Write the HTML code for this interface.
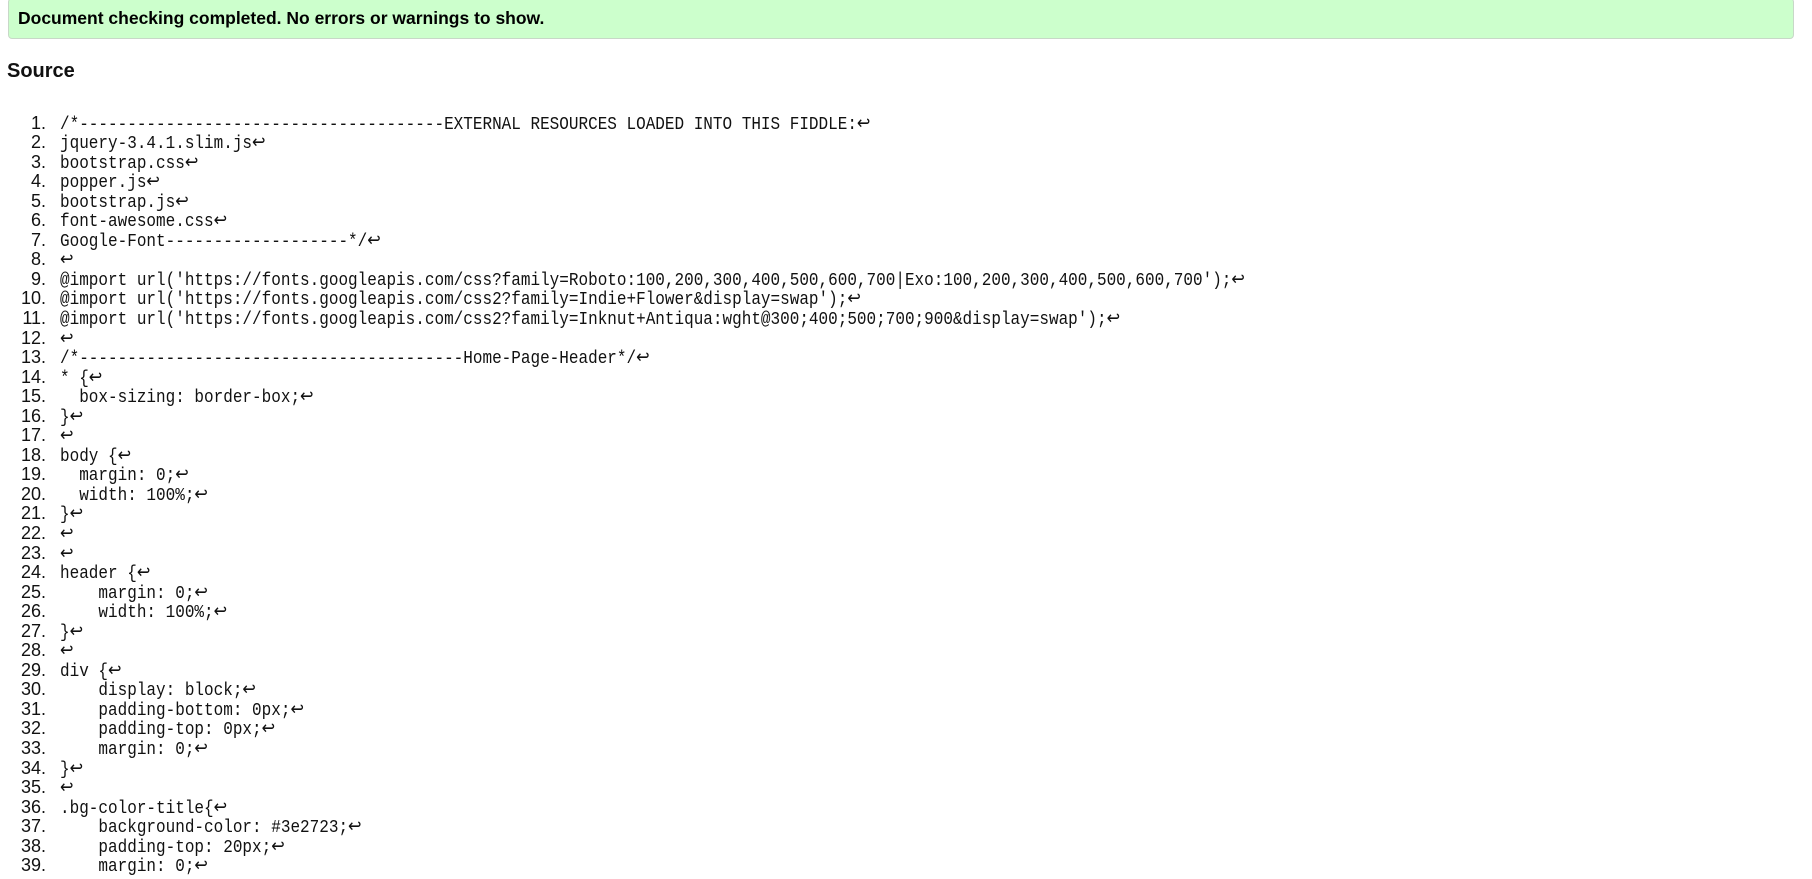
<!DOCTYPE html>
<html><head><meta charset="utf-8"><style>
body{margin:0;background:#fff;color:#111;}
.ok{position:absolute;left:8px;top:-2px;width:1786px;height:41px;background:#ccffcc;border:1px solid #c8d8c8;border-radius:4px;box-sizing:border-box;}
.ok span{position:absolute;left:9px;top:9px;font:bold 17.5px "Liberation Sans",sans-serif;color:#000;}
h2{position:absolute;left:7px;top:60px;margin:0;font:bold 20px "Liberation Sans",sans-serif;color:#111;}
.src{position:absolute;left:0;top:114.5px;}
.l{height:19.56px;white-space:pre;position:relative;}
.n{position:absolute;left:0;top:-1px;width:46px;text-align:right;font:18px/19.56px "Liberation Sans",sans-serif;}
.t{position:absolute;left:60px;top:1px;font:16px/19.56px "Liberation Mono",monospace;transform:scaleY(1.15);transform-origin:0 60%;}
</style></head><body>
<div class="ok"><span>Document checking completed. No errors or warnings to show.</span></div>
<h2>Source</h2>
<div class="src">
<div class="l"><span class="n">1.</span><span class="t">/*--------------------------------------EXTERNAL RESOURCES LOADED INTO THIS FIDDLE:↩</span></div>
<div class="l"><span class="n">2.</span><span class="t">jquery-3.4.1.slim.js↩</span></div>
<div class="l"><span class="n">3.</span><span class="t">bootstrap.css↩</span></div>
<div class="l"><span class="n">4.</span><span class="t">popper.js↩</span></div>
<div class="l"><span class="n">5.</span><span class="t">bootstrap.js↩</span></div>
<div class="l"><span class="n">6.</span><span class="t">font-awesome.css↩</span></div>
<div class="l"><span class="n">7.</span><span class="t">Google-Font-------------------*/↩</span></div>
<div class="l"><span class="n">8.</span><span class="t">↩</span></div>
<div class="l"><span class="n">9.</span><span class="t">@import url('https://fonts.googleapis.com/css?family=Roboto:100,200,300,400,500,600,700|Exo:100,200,300,400,500,600,700');↩</span></div>
<div class="l"><span class="n">10.</span><span class="t">@import url('https://fonts.googleapis.com/css2?family=Indie+Flower&amp;display=swap');↩</span></div>
<div class="l"><span class="n">11.</span><span class="t">@import url('https://fonts.googleapis.com/css2?family=Inknut+Antiqua:wght@300;400;500;700;900&amp;display=swap');↩</span></div>
<div class="l"><span class="n">12.</span><span class="t">↩</span></div>
<div class="l"><span class="n">13.</span><span class="t">/*----------------------------------------Home-Page-Header*/↩</span></div>
<div class="l"><span class="n">14.</span><span class="t">* {↩</span></div>
<div class="l"><span class="n">15.</span><span class="t">  box-sizing: border-box;↩</span></div>
<div class="l"><span class="n">16.</span><span class="t">}↩</span></div>
<div class="l"><span class="n">17.</span><span class="t">↩</span></div>
<div class="l"><span class="n">18.</span><span class="t">body {↩</span></div>
<div class="l"><span class="n">19.</span><span class="t">  margin: 0;↩</span></div>
<div class="l"><span class="n">20.</span><span class="t">  width: 100%;↩</span></div>
<div class="l"><span class="n">21.</span><span class="t">}↩</span></div>
<div class="l"><span class="n">22.</span><span class="t">↩</span></div>
<div class="l"><span class="n">23.</span><span class="t">↩</span></div>
<div class="l"><span class="n">24.</span><span class="t">header {↩</span></div>
<div class="l"><span class="n">25.</span><span class="t">    margin: 0;↩</span></div>
<div class="l"><span class="n">26.</span><span class="t">    width: 100%;↩</span></div>
<div class="l"><span class="n">27.</span><span class="t">}↩</span></div>
<div class="l"><span class="n">28.</span><span class="t">↩</span></div>
<div class="l"><span class="n">29.</span><span class="t">div {↩</span></div>
<div class="l"><span class="n">30.</span><span class="t">    display: block;↩</span></div>
<div class="l"><span class="n">31.</span><span class="t">    padding-bottom: 0px;↩</span></div>
<div class="l"><span class="n">32.</span><span class="t">    padding-top: 0px;↩</span></div>
<div class="l"><span class="n">33.</span><span class="t">    margin: 0;↩</span></div>
<div class="l"><span class="n">34.</span><span class="t">}↩</span></div>
<div class="l"><span class="n">35.</span><span class="t">↩</span></div>
<div class="l"><span class="n">36.</span><span class="t">.bg-color-title{↩</span></div>
<div class="l"><span class="n">37.</span><span class="t">    background-color: #3e2723;↩</span></div>
<div class="l"><span class="n">38.</span><span class="t">    padding-top: 20px;↩</span></div>
<div class="l"><span class="n">39.</span><span class="t">    margin: 0;↩</span></div>
</div>
</body></html>
